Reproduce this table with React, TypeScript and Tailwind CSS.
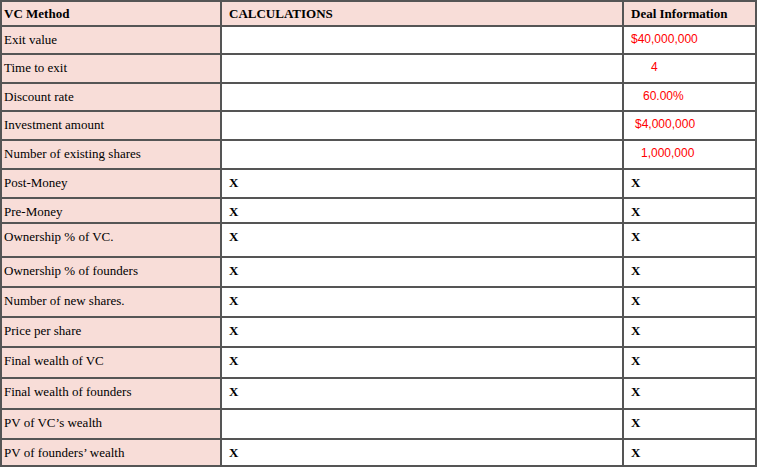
import React from "react";

type Row = {
    label: string;
    calc?: string;
    deal?: string;
    dealPad?: string;
    dealRed?: boolean;
    height: string;
};

const rows: Row[] = [
    { label: "Exit value", deal: "$40,000,000", dealPad: "pl-[7px]", dealRed: true, height: "h-[26px]" },
    { label: "Time to exit", deal: "4", dealPad: "pl-[27px]", dealRed: true, height: "h-[27px]" },
    { label: "Discount rate", deal: "60.00%", dealPad: "pl-[19px]", dealRed: true, height: "h-[26px]" },
    { label: "Investment amount", deal: "$4,000,000", dealPad: "pl-[11px]", dealRed: true, height: "h-[27px]" },
    { label: "Number of existing shares", deal: "1,000,000", dealPad: "pl-[17px]", dealRed: true, height: "h-[27px]" },
    { label: "Post-Money", calc: "X", deal: "X", height: "h-[27px]" },
    { label: "Pre-Money", calc: "X", deal: "X", height: "h-[23px]" },
    { label: "Ownership % of VC.", calc: "X", deal: "X", height: "h-[32px]" },
    { label: "Ownership % of founders", calc: "X", deal: "X", height: "h-[28px]" },
    { label: "Number of new shares.", calc: "X", deal: "X", height: "h-[28px]" },
    { label: "Price per share", calc: "X", deal: "X", height: "h-[28px]" },
    { label: "Final wealth of VC", calc: "X", deal: "X", height: "h-[29px]" },
    { label: "Final wealth of founders", calc: "X", deal: "X", height: "h-[29px]" },
    { label: "PV of VC\u2019s wealth", deal: "X", height: "h-[28px]" },
    { label: "PV of founders\u2019 wealth", calc: "X", deal: "X", height: "h-[25px]" },
];

const serif = "font-['Liberation_Serif','Times_New_Roman',serif]";
const sans = "font-['Liberation_Sans',Arial,sans-serif]";

const App: React.FC = () => {
    return (
        <div className="w-[765px] h-[473px] bg-white">
            <div className={`w-[757px] grid grid-cols-[218px_400px_131px] gap-[2px] p-[2px] bg-[#555555] text-[13px] leading-[15px] text-black ${serif}`}>
                <div className="h-[23px] bg-[#f8ddd8] pl-[2px] pt-[4px] font-bold">VC Method</div>
                <div className="h-[23px] bg-[#f8ddd8] pl-[7px] pt-[4px] font-bold">CALCULATIONS</div>
                <div className="h-[23px] bg-[#f8ddd8] pl-[7px] pt-[4px] font-bold">Deal Information</div>

                {rows.map((row) => (
                    <React.Fragment key={row.label}>
                        <div className={`${row.height} bg-[#f8ddd8] pl-[2px] pt-[5px]`}>{row.label}</div>
                        <div className={`${row.height} bg-white pl-[7px] pt-[5px] font-bold`}>{row.calc}</div>
                        {row.dealRed ? (
                            <div className={`${row.height} bg-white ${row.dealPad} pt-[5px] text-[12px] leading-[14px] text-[#ff0000] ${sans}`}>
                                {row.deal}
                            </div>
                        ) : (
                            <div className={`${row.height} bg-white pl-[7px] pt-[5px] font-bold`}>{row.deal}</div>
                        )}
                    </React.Fragment>
                ))}
            </div>
        </div>
    );
};

export default App;
